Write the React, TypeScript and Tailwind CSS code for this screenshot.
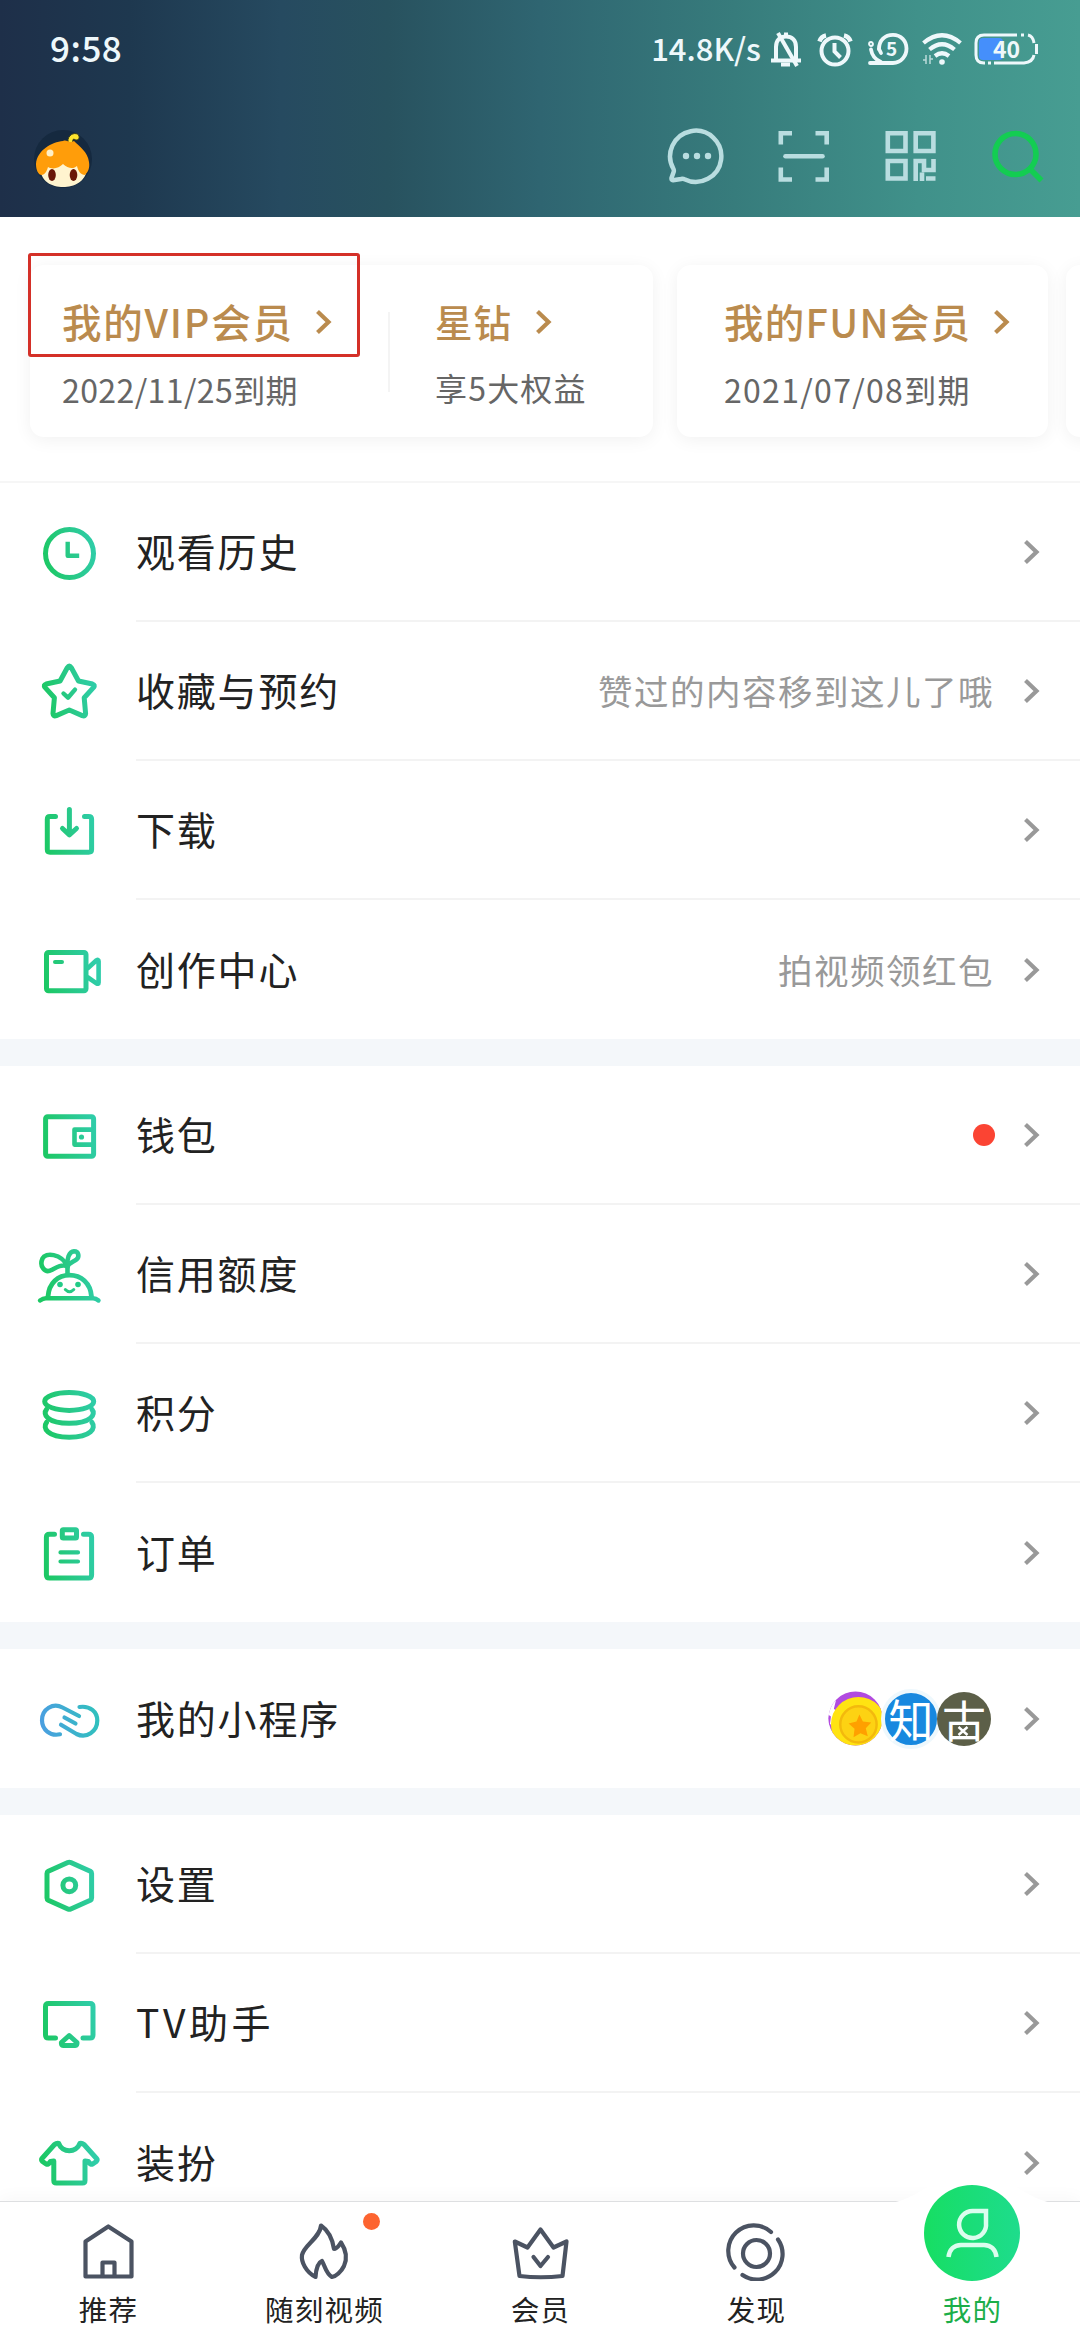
import React from 'react';
import { clsx } from 'clsx';

type IconProps = { children: React.ReactNode };

const GreenIcon: React.FC<IconProps> = ({ children }) => (
  <svg
    width="72"
    height="72"
    viewBox="0 0 72 72"
    fill="none"
    stroke="url(#green)"
    strokeWidth="5"
    strokeLinecap="round"
    strokeLinejoin="round"
    className="shrink-0"
  >
    {children}
  </svg>
);

const Chevron: React.FC<{ className?: string }> = ({ className }) => (
  <svg width="17" height="26" viewBox="0 0 17 26" fill="none" stroke="currentColor" strokeWidth="4.2" className={clsx('shrink-0', className)}>
    <path d="M2.5 2.5 13.5 13 2.5 23.5" />
  </svg>
);

const HistoryIcon = () => (
  <GreenIcon>
    <circle cx="36.5" cy="36.5" r="24" />
    <path d="M34.7 27v11.8H44" strokeLinecap="square" strokeWidth="4.4" />
  </GreenIcon>
);

const StarIcon = () => (
  <GreenIcon>
    <path d="M34.4 11.5Q36.3 8.6 38.2 11.5L45.5 25 59.5 28Q62.4 29 60.6 31.4L51.2 41.8 52.6 57.5Q52.4 60.8 49.3 59.6L36.3 54 23.3 59.6Q20.2 60.8 20 57.5L21.4 41.8 12 31.4Q10.2 29 13.1 28L27.1 25Z" />
    <path d="M30.5 37.5 35 41.7 42 33.6" strokeWidth="4.4" />
  </GreenIcon>
);

const DownloadIcon = () => (
  <GreenIcon>
    <path d="M22.5 21.5H17Q14.3 21.5 14.3 24.2V54.6Q14.3 57.3 17 57.3H55.6Q58.6 57.3 58.6 54.6V24.2Q58.6 21.5 55.6 21.5H51.5" />
    <path d="M36.4 14.5V39M29.5 33.5 36.4 39.8 43.5 33.5" />
  </GreenIcon>
);

const VideoIcon = () => (
  <GreenIcon>
    <rect x="13.5" y="18.4" width="39.5" height="38.4" rx="2" />
    <path d="M22 28h7" strokeWidth="4" />
    <path d="M55 34 63.5 26.3Q65.6 25.2 65.6 27.3V48.4Q65.6 50.4 63.5 49.4L55 43.5" strokeWidth="4.6" />
  </GreenIcon>
);

const WalletIcon = () => (
  <GreenIcon>
    <rect x="12.6" y="16.8" width="48" height="39.4" rx="2" />
    <path d="M60 29.6H41.5V44.6H60" strokeWidth="4.6" />
    <circle cx="48.5" cy="37" r="2.6" fill="url(#green)" stroke="none" />
  </GreenIcon>
);

const CreditIcon = () => (
  <GreenIcon>
    <path d="M7 61.5Q10 59.3 13 59.3H60Q63 59.3 65.5 61.5" strokeWidth="4.4" />
    <path d="M15 57.5C16 44 25 36.2 36.5 36.2S57.5 44 58.5 57.5" strokeWidth="4.8" />
    <path d="M34.5 35V27C28 14.5 12.5 13 9.5 19.5 6 27.5 12 34.5 18.5 31 24 28 27.5 25.5 34.5 27" strokeWidth="4.6" />
    <path d="M34.5 28C33.5 20 36 12.5 41 12.3 46 12.3 46.5 18 43.5 20.5 40.5 23 36 23.5 34.5 28" strokeWidth="4.6" />
    <path d="M32.3 50.5Q36.5 55 40.8 50.5" strokeWidth="3" />
    <g fill="#22cb87" stroke="none">
      <circle cx="27" cy="45.5" r="2.8" />
      <circle cx="45" cy="45.5" r="2.8" />
    </g>
  </GreenIcon>
);

const PointsIcon = () => (
  <GreenIcon>
    <ellipse cx="36.2" cy="23.4" rx="24.5" ry="9" />
    <path d="M13.5 31.5C9.5 36 14 45.3 36.2 45.3S63 36 59 31.5" />
    <path d="M13.5 44.5C9.5 50 14 59.3 36.2 59.3S63 50 59 44.5" />
  </GreenIcon>
);

const OrderIcon = () => (
  <GreenIcon>
    <path d="M21.5 17.2H16.4Q13.4 17.2 13.4 20.2V58Q13.4 61 16.4 61H55.6Q58.6 61 58.6 58V20.2Q58.6 17.2 55.6 17.2H50.5" />
    <rect x="29.3" y="12.7" width="14.2" height="8.4" rx="1" />
    <path d="M27.5 35.4H45M27.5 44.5H45" strokeWidth="4.2" />
  </GreenIcon>
);

const MiniAppIcon = () => (
  <svg width="72" height="72" viewBox="0 0 72 72" fill="none" stroke="url(#blue)" strokeWidth="4.2" strokeLinecap="round" className="shrink-0">
    <path d="M27 51.3C17 53.5 9 46.5 9 37.3 9 26 20 19.5 29.5 24.5L46 33" />
    <path d="M46.5 24C57 22.5 64.3 28.5 64.3 37.5 64.3 48.5 53.5 56 43.5 51L28 41.8" />
    <path d="M31.5 34.5 42.5 40.5" />
  </svg>
);

const SettingsIcon = () => (
  <GreenIcon>
    <path d="M34.8 13.5Q36.3 12.8 37.8 13.5L57.3 22.3Q58.6 23 58.6 24.5V49Q58.6 50.5 57.3 51.2L37.8 60Q36.3 60.7 34.8 60L15.3 51.2Q14 50.5 14 49V24.5Q14 23 15.3 22.3Z" />
    <circle cx="36.3" cy="36.3" r="6.4" />
  </GreenIcon>
);

const TvIcon = () => (
  <GreenIcon>
    <path d="M22.5 50H15.5Q12.5 50 12.5 47V18.4Q12.5 15.4 15.5 15.4H57Q60 15.4 60 18.4V47Q60 50 57 50H50" />
    <path d="M36.2 47.5 44 54.5Q44.3 57.4 42.3 57.4H30.1Q28.1 57.4 28.4 54.5Z" />
  </GreenIcon>
);

const ShirtIcon = () => (
  <GreenIcon>
    <path d="M25.8 16.5Q23.5 16 21.5 17.5L9 31.5Q8 33 9.5 34.5L13.5 37.3Q15.500 37.5 17.5 34.5L20.8 34V53.5Q20.8 56 23.3 56H49.5Q52 56 52 53.5V34L55.3 34.5Q57.3 37.5 59.3 37.3L63.3 34.5Q64.8 33 63.5 31.5L51 17.5Q49 16 46.8 16.5C43.5 26 29 26 25.8 16.5Z" />
  </GreenIcon>
);

const MiniApps = () => (
  <div className="mr-[2px] flex items-center">
    <svg width="55" height="55" viewBox="0 0 56 56">
      <clipPath id="coinClip">
        <circle cx="28" cy="28" r="27.5" />
      </clipPath>
      <g clipPath="url(#coinClip)">
        <rect width="56" height="56" fill="#b14be0" />
        <path d="M-2 14 8 10 6 18 10 22 3 34-2 32Z" fill="#fff" />
        <path d="M0 24 3 26 2 34 0 34Z" fill="#b14be0" />
        <circle cx="31" cy="34" r="28" fill="#ffe312" />
        <circle cx="31" cy="34" r="18.5" fill="#fdd213" stroke="#f3b90d" strokeWidth="2.5" />
        <path d="m32 24 3.5 7 8.5 1-5.5 6 2 8-7.5-3-7 4 1-8.5-6-5.5 8-2Z" fill="#ffa000" />
      </g>
    </svg>
    <div className="-ml-[2px] flex size-[60px] items-center justify-center rounded-full border-[4px] border-[#eef8fd] bg-[#1788df] text-[45px] leading-[52px] text-white">
      知
    </div>
    <div className="relative -ml-[4px] flex size-[54px] items-center justify-center rounded-full bg-[#5c5f48] text-[44px] leading-[54px] text-white">
      古
      <svg width="12" height="10" viewBox="0 0 12 10" stroke="#fff" strokeWidth="2.4" className="absolute left-[20px] top-[34px]">
        <path d="M1.500 1 10.500 9M10.500 1 1.500 9" />
      </svg>
    </div>
  </div>
);

type Item = { label: string; icon: React.FC; hint?: string; extra?: React.ReactNode; wide?: boolean };

const groups: Item[][] = [
  [
    { label: '观看历史', icon: HistoryIcon },
    { label: '收藏与预约', icon: StarIcon, hint: '赞过的内容移到这儿了哦' },
    { label: '下载', icon: DownloadIcon },
    { label: '创作中心', icon: VideoIcon, hint: '拍视频领红包' },
  ],
  [
    { label: '钱包', icon: WalletIcon, extra: <span className="-mr-[2px] size-[22px] rounded-full bg-[#fb4433]" /> },
    { label: '信用额度', icon: CreditIcon },
    { label: '积分', icon: PointsIcon },
    { label: '订单', icon: OrderIcon },
  ],
  [{ label: '我的小程序', icon: MiniAppIcon, extra: <MiniApps /> }],
  [
    { label: '设置', icon: SettingsIcon },
    { label: 'TV助手', icon: TvIcon, wide: true },
    { label: '装扮', icon: ShirtIcon },
  ],
];

const MenuRow: React.FC<{ item: Item; last: boolean }> = ({ item, last }) => {
  const Icon = item.icon;
  return (
    <div className="flex h-[139px] shrink-0 items-center pl-[33px]">
      <Icon />
      <div className={clsx('ml-[31px] flex h-full flex-1 items-center pr-[40px]', !last && 'border-b-2 border-[#f3f3f3]')}>
        <span className={clsx('pb-[2px] text-[39px] text-[#222]', item.wide ? 'tracking-[3.6px]' : 'tracking-[1.8px]')}>{item.label}</span>
        <div className="ml-auto flex items-center gap-[30px]">
          {item.hint && <span className="-mr-[1px] text-[34.5px] tracking-[1.5px] text-[#999]">{item.hint}</span>}
          {item.extra}
          <Chevron className="text-[#999]" />
        </div>
      </div>
    </div>
  );
};

const StatusBar = () => (
  <div className="flex h-[98px] items-center justify-between pl-[50px] pr-[42px] text-[#eef8fb]">
    <span className="pb-[3px] text-[35px] font-medium tracking-[0.5px]">9:58</span>
    <div className="flex items-center">
      <span className="mr-[8px] pb-[2px] text-[31px] font-medium">14.8K/s</span>
      <svg width="34" height="38" viewBox="0 0 34 38" fill="none" stroke="currentColor" strokeWidth="4" className="mr-[14px]">
        <path d="M2 30.5H32M7 30V17C7 10 11 6.5 17 6.5S27 10 27 17V30M17 2.5V6" />
        <path d="M12 34.5H21" />
        <path d="M9 3 28 36" />
      </svg>
      <svg width="36" height="36" viewBox="0 0 36 36" fill="none" stroke="currentColor" strokeWidth="4" className="mr-[14px]">
        <circle cx="18" cy="20" r="13.5" />
        <path d="M17.5 12V20.5L23.5 26.5" />
        <path d="M2.5 10.5Q4 5.5 9 4.5M33.5 10.5Q32 5.5 27 4.5" strokeWidth="4.5" />
      </svg>
      <div className="relative mr-[12px]">
        <svg width="42" height="34" viewBox="0 0 42 34" fill="none" stroke="currentColor" strokeWidth="3.8" strokeLinecap="round">
          <path d="M12 17C12 8 18 2.8 26 2.8 34 2.8 39.5 9 39.5 16.5S34 31 26 31H3" />
          <path d="M4 17.5C5 24 9 28 14 30" />
          <circle cx="4" cy="12" r="1" />
          <path d="M12 17 14 21" />
        </svg>
        <span className="absolute left-[19px] top-[4px] text-[19px] font-bold leading-[24px]">5</span>
      </div>
      <svg width="42" height="34" viewBox="0 0 42 34" fill="none" stroke="currentColor" strokeWidth="4.2" className="mr-[11px]">
        <path d="M2.5 11Q21-4.5 39.5 11M8.5 17.5Q21 7 33.5 17.5M14 24Q21 18.5 28 24" />
        <circle cx="21" cy="30" r="2.8" fill="currentColor" stroke="none" />
        <path d="M5 23V32M9 23V32M2 28H5M9 27H12" strokeWidth="1.5" opacity=".7" />
      </svg>
      <div className="relative">
        <svg width="64" height="32" viewBox="0 0 64 32" fill="none" stroke="currentColor" strokeWidth="3">
          <rect x="5" y="5" width="24" height="22" rx="4" fill="#458ffb" stroke="none" />
          <path d="M43 2H10Q2 2 2 10V22Q2 30 10 30H11M20 30H50Q59 29 60 22M60 10Q59 3 54 2" />
          <path d="M47 2H50M14 30H17M62.5 11V21" />
        </svg>
        <span className="absolute left-[19px] top-[3px] text-[23px] font-bold leading-[24px]">40</span>
      </div>
    </div>
  </div>
);

const Avatar = () => (
  <svg width="60" height="64" viewBox="0 0 60 64">
    <circle cx="29" cy="33" r="29" fill="#15293f" />
    <path d="M34 16C33 8 43 5 45 10 46 14 42 15 40 13 38 13 39 18 38 20Z" fill="#ffe52e" stroke="#3a3b18" strokeWidth="1" />
    <path d="M6 40C6 56 18 61 29 61S52 56 53 42L40 30H14Z" fill="#fff4cf" />
    <path d="M29 15C18 16 3 24 2 38 2 44 4 49 8 49 12 48 13 44 14 41 19 44 25 42 29 38 34 43 40 43 43 40 44 45 47 49 51 49 54 46 56 42 55 36 54 26 45 20 40 15 35 18 33 13 29 15Z" fill="#ff9d0a" />
    <ellipse cx="18" cy="49" rx="3.8" ry="6" fill="#6a1708" />
    <ellipse cx="39.5" cy="49" rx="3.8" ry="6" fill="#6a1708" />
    <circle cx="16" cy="27" r="3.5" fill="#fff0c8" />
  </svg>
);

const TopBar = () => (
  <div className="flex h-[119px] items-start justify-between pl-[34px] pr-[30px] pt-[26px] text-[#b9dde0]">
    <div className="pt-[2px]">
      <Avatar />
    </div>
    <div className="flex gap-[43px]">
      <svg width="64" height="64" viewBox="0 0 64 64" fill="none" stroke="currentColor" strokeWidth="4.5" strokeLinejoin="round">
        <path d="M8.5 45A25.6 25.6 0 1 1 19.5 55.3Q18 54.5 16 55L8 56.2Q6.3 56.3 6.500 54L8.8 47.5Q9 46.300 8.5 45Z" />
        <g fill="currentColor" stroke="none">
          <circle cx="21" cy="32" r="3.2" />
          <circle cx="32" cy="32" r="3.2" />
          <circle cx="43" cy="32" r="3.2" />
        </g>
      </svg>
      <svg width="64" height="64" viewBox="0 0 64 64" fill="none" stroke="currentColor" strokeWidth="4.6">
        <path d="M8.8 20.5V9.3H20M43.5 9.3H54.7V20.5M54.7 43.5V55.5H43.5M20 55.5H8.8V43.5" />
        <path d="M13.5 32.3H50.5" strokeLinecap="round" />
      </svg>
      <svg width="64" height="64" viewBox="0 0 64 64" fill="none" stroke="currentColor" strokeWidth="4.6">
        <path d="M8.8 9.3H26.5V27H8.8ZM36.7 9.3H54.4V27H36.7ZM8.8 37H26.5V54.5H8.8Z" />
        <path d="M36.7 57V37H45V46H54.5V35M43 48.5V57M47 54.5H56.5" />
      </svg>
      <svg width="64" height="64" viewBox="0 0 64 64" fill="none" stroke="#13cd52" strokeWidth="5.6">
        <circle cx="29.5" cy="30" r="20.5" />
        <path d="M43.5 44.5 55.5 56.5" />
      </svg>
    </div>
  </div>
);

const Membership = () => (
  <section className="h-[266px] shrink-0 overflow-hidden border-b-2 border-[#f6f6f6] pl-[30px] pt-[48px]">
    <div className="flex w-[1200px] gap-[24px]">
      <div className="relative flex h-[172px] w-[623px] rounded-[14px] bg-white pl-[32px] shadow-[0_3px_18px_rgba(0,0,0,0.06)]">
        <div className="w-[326px] pt-[31px]">
          <div className="flex h-[52px] items-center text-[#ba8b4e]">
            <span className="w-[231px] whitespace-nowrap pb-[2px] text-[39.5px] font-medium tracking-[1.8px]">我的VIP会员</span>
            <Chevron className="ml-[22px]" />
          </div>
          <div className="mt-[17px] text-[32px] leading-[48px] tracking-[0.4px] text-[#666]">2022/11/25到期</div>
        </div>
        <div className="mt-[47px] h-[80px] w-[2px] bg-[#f4f4f4]" />
        <div className="pl-[45px] pt-[31px]">
          <div className="flex h-[52px] items-center text-[#ba8b4e]">
            <span className="pb-[2px] text-[37.5px] font-medium tracking-[1px]">星钻</span>
            <Chevron className="ml-[23px]" />
          </div>
          <div className="mt-[15px] text-[32px] leading-[48px] tracking-[1.2px] text-[#666]">享5大权益</div>
        </div>
        {/* highlight frame over the VIP entry */}
        <div className="absolute -left-[2px] -top-[12px] h-[104px] w-[332px] rounded-[3px] border-[3px] border-[#d43028]" />
      </div>
      <div className="h-[172px] w-[371px] rounded-[14px] bg-white pl-[47px] pt-[31px] shadow-[0_3px_18px_rgba(0,0,0,0.06)]">
        <div className="flex h-[52px] items-center text-[#ba8b4e]">
          <span className="w-[247px] whitespace-nowrap pb-[2px] text-[39.5px] font-medium tracking-[1.3px]">我的FUN会员</span>
          <Chevron className="ml-[22px]" />
        </div>
        <div className="mt-[17px] text-[32px] leading-[48px] tracking-[1.3px] text-[#666]">2021/07/08到期</div>
      </div>
      <div className="-ml-[6px] h-[172px] flex-1 rounded-[14px] bg-white shadow-[0_3px_18px_rgba(0,0,0,0.06)]" />
    </div>
  </section>
);

const TabIcon: React.FC<IconProps> = ({ children }) => (
  <svg width="60" height="60" viewBox="0 0 60 60" fill="none" stroke="#4b5362" strokeWidth="4.2" strokeLinecap="round" strokeLinejoin="round">
    {children}
  </svg>
);

const Tab: React.FC<{ label: string; dot?: boolean; children: React.ReactNode }> = ({ label, dot, children }) => (
  <div className="relative flex flex-1 flex-col items-center pt-[19px]">
    <TabIcon>{children}</TabIcon>
    <span className="mt-[7px] pl-[1px] text-[28.5px] leading-[42px] tracking-[1.3px] text-[#222]">{label}</span>
    {dot && <span className="absolute left-[147px] top-[11px] size-[17px] rounded-full bg-[#fd6430]" />}
  </div>
);

const TabBar = () => (
  <nav className="relative flex h-[139px] shrink-0 border-t border-[#dedfe1] bg-white shadow-[0_-4px_16px_rgba(0,0,0,0.03)]">
    <Tab label="推荐">
      <path d="M7.5 20.5 30.3 5.5 53.5 20.5V55.5H7.5Z" />
      <path d="M24.5 55V41.5H36.5V55" />
    </Tab>
    <Tab label="随刻视频" dot>
      <path d="M27 4.5C35 10 38.5 18 40 28 43 28 44.5 25 47 21.5 52 29 54 36 50 45 47 51 42 55.5 38 56 32 53 31 45 28 40 23 42 22 49 21.5 56 12 51 7 41 8 34 10 24 26 17 27 4.5Z" />
    </Tab>
    <Tab label="会员">
      <path d="M4.8 20.5 17.5 26.5 30.5 8.5 43.5 26.5 56.5 20.5 52.5 55Q30.500 57.5 9.5 55Z" />
      <path d="M23.5 36 30.500 45 38 36" />
    </Tab>
    <Tab label="发现">
      <circle cx="30.5" cy="32.5" r="13.5" />
      <path d="M8.5 46.5A25.500 25.5 0 0 1 45 11M52 18.5A25.5 25.5 0 0 1 16.5 54" />
    </Tab>
    <div className="relative flex flex-1 flex-col items-center">
      <svg width="190" height="28" viewBox="0 0 190 28" className="absolute -top-[26px] left-[13px]">
        <path d="M0 28C44 28 46 0 95 0S146 28 190 28Z" fill="#fff" />
      </svg>
      <div className="relative -mt-[17px] flex size-[96px] items-center justify-center rounded-full bg-gradient-to-r from-[#17de62] to-[#1edc8c]">
        <svg width="60" height="60" viewBox="0 0 60 60" fill="none" stroke="#dbfdee" strokeWidth="4.5">
          <path d="M44 8V20A13.5 13.5 0 1 1 30.5 8Z" />
          <path d="M6.5 54C7.5 46.5 12 42 19 42H42C49 42 53.5 46.5 54.5 54" />
        </svg>
      </div>
      <span className="mt-[7px] pl-[1px] text-[28.5px] leading-[42px] tracking-[1.3px] text-[#1cae49]">我的</span>
    </div>
  </nav>
);

export default function App() {
  return (
    <div className="flex h-[2340px] w-[1080px] flex-col overflow-hidden bg-white font-['Noto_Sans_CJK_SC',sans-serif]">
      <svg width="0" height="0" className="absolute">
        <defs>
          <linearGradient id="green" gradientUnits="userSpaceOnUse" x1="10" y1="40" x2="64" y2="30">
            <stop offset="0" stopColor="#1cc864" />
            <stop offset="0.5" stopColor="#28c988" />
            <stop offset="1" stopColor="#2fcdaa" />
          </linearGradient>
          <linearGradient id="blue" gradientUnits="userSpaceOnUse" x1="8" y1="40" x2="66" y2="34">
            <stop offset="0" stopColor="#4a9fe0" />
            <stop offset="1" stopColor="#30c1bd" />
          </linearGradient>
        </defs>
      </svg>

      <header className="h-[217px] shrink-0 bg-[linear-gradient(90deg,#1e2f49_0%,#1e384f_12%,#264a60_26%,#28525f_36%,#2f6571_50%,#377c7c_68%,#40918a_85%,#479d92_100%)]">
        <StatusBar />
        <TopBar />
      </header>

      <main className="flex min-h-0 flex-1 flex-col overflow-hidden">
        <Membership />
        <div className="flex flex-col gap-[27px] bg-[#f4f7fa]">
          {groups.map((items, i) => (
            <section key={i} className="bg-white">
              {items.map((item, j) => (
                <MenuRow key={item.label} item={item} last={j === items.length - 1} />
              ))}
            </section>
          ))}
        </div>
      </main>

      <TabBar />
    </div>
  );
}
